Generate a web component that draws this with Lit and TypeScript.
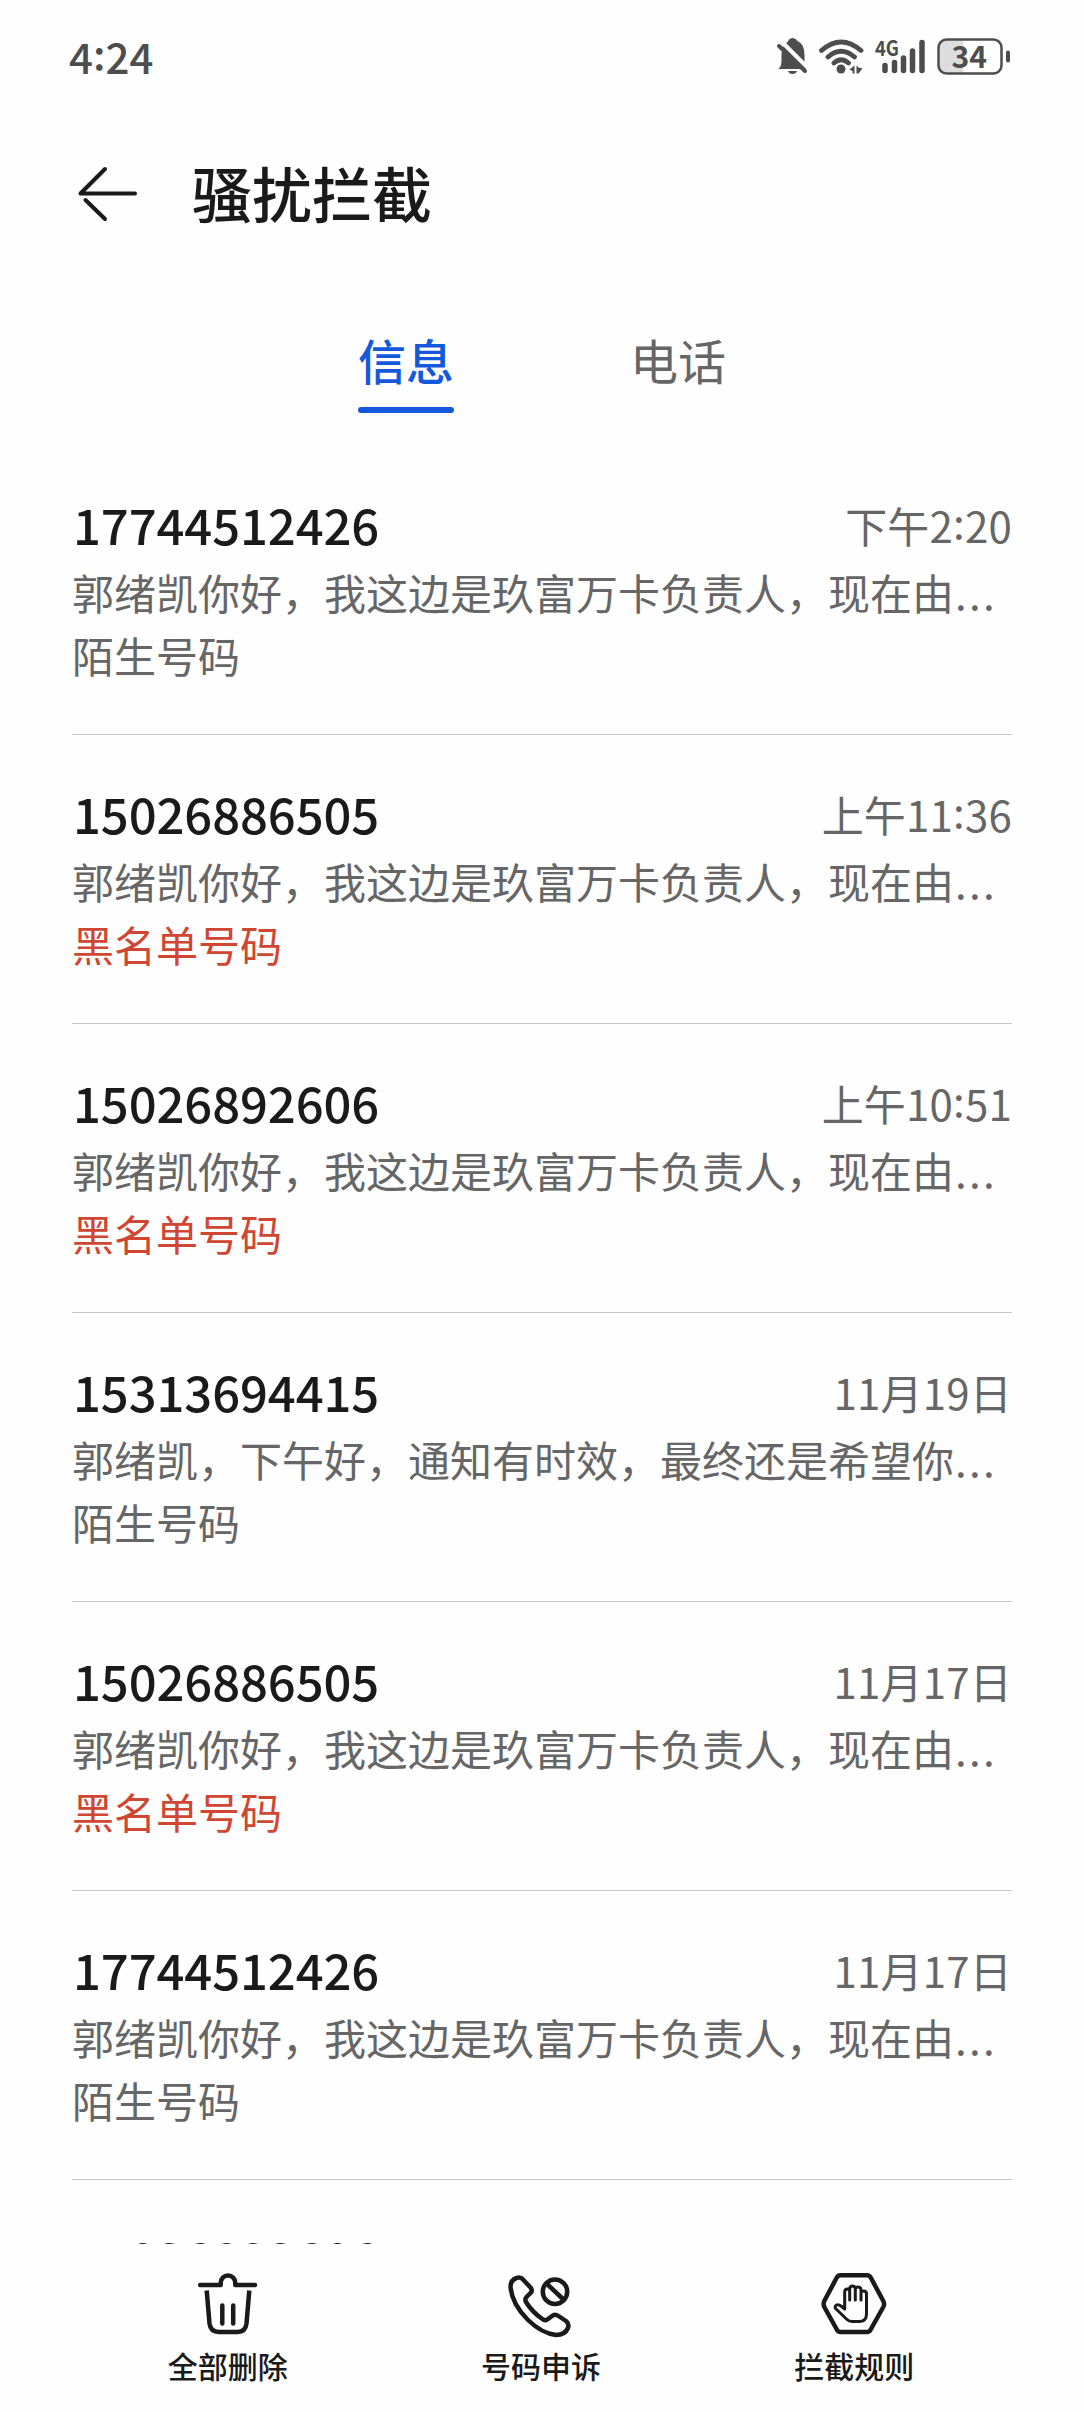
import { LitElement, html, css, svg, nothing } from "lit";
import { customElement, property } from "lit/decorators.js";

interface Message { number: string; time: string; text?: string; tag?: string; blocked?: boolean }

const PROMO = "郭绪凯你好，我这边是玖富万卡负责人，现在由";
const MESSAGES: Message[] = [
  { number: "17744512426", time: "下午2:20", text: PROMO, tag: "陌生号码" },
  { number: "15026886505", time: "上午11:36", text: PROMO, tag: "黑名单号码", blocked: true },
  { number: "15026892606", time: "上午10:51", text: PROMO, tag: "黑名单号码", blocked: true },
  { number: "15313694415", time: "11月19日", text: "郭绪凯，下午好，通知有时效，最终还是希望你", tag: "陌生号码" },
  { number: "15026886505", time: "11月17日", text: PROMO, tag: "黑名单号码", blocked: true },
  { number: "17744512426", time: "11月17日", text: PROMO, tag: "陌生号码" },
  { number: "15026892606", time: "11月16日" },
];

/* Raises the colon of a clock time to the middle of the digits. */
const clock = (time: string) => {
  const [before, after] = time.split(":");
  return after === undefined ? before : html`${before}<span class="colon">:</span>${after}`;
};

@customElement("status-bar")
class StatusBar extends LitElement {
  static styles = css`
    :host { display: flex; height: 112px; box-sizing: border-box; padding: 0 72px 0 69px; justify-content: space-between; align-items: center; color: #4d4d4d; }
    .time { font-size: 42px; font-weight: 500; line-height: 60px; margin-top: -1px; }
    .colon { vertical-align: 4px; line-height: 1; }
    .icons { display: block; }
    .net { font: 700 21px "Noto Sans CJK SC", sans-serif; }
    .level { font: 700 30px "Noto Sans CJK SC", sans-serif; }
  `;
  render() {
    return html`
      <span class="time">${clock("4:24")}</span>
      <svg class="icons" width="236" height="50" viewBox="776 30 236 50" fill="none" stroke="#4d4d4d" stroke-linecap="round">
        <path d="M778.500 68q3-3 3-7v-7q0-9 6-13q2-4 5-4t5 3q7 3 7 14v7q0 3 2 7z" fill="#4d4d4d" stroke="none"/>
        <path d="M788 70h9q-1 3-4.500 3t-4.500-3z" fill="#4d4d4d" stroke="none"/>
        <path d="M782 41L808 67" stroke="#fefefe" stroke-width="4"/>
        <path d="M779 45L805 70" stroke-width="4"/>
        <path d="M821.500 49.500q19.500-17 39.500 0M828 56q13-11.500 26.500 0M834 62q7-6.500 14.500 0" stroke-width="4.800"/>
        <circle cx="841" cy="68" r="4.500" fill="#4d4d4d" stroke="none"/>
        <path d="M854.500 64.500v8h-2v-2.500l-3-1.500zM856.500 64.500v8h2l4-5-4-1z" fill="#4d4d4d" stroke="none"/>
        <text class="net" x="875" y="55" fill="#4d4d4d" stroke="none" textLength="24" lengthAdjust="spacingAndGlyphs">4G</text>
        <path d="M885 64.500v5M894.500 61.500v8M903.500 57v12.500M912.500 50v19.500M922 41.500v28" stroke-width="5.500"/>
        <path d="M963 39v33h-17q-7 0-7-8v-17q0-8 7-8z" fill="#ddd" stroke="none"/>
        <rect x="938.500" y="38.500" width="63" height="34" rx="8" stroke-width="2.500"/>
        <path d="M1008 51.500v8" stroke-width="4"/>
        <text class="level" x="951.500" y="66.500" fill="#4d4d4d" stroke="none" textLength="35.500" lengthAdjust="spacingAndGlyphs">34</text>
      </svg>`;
  }
}

@customElement("message-row")
class MessageRow extends LitElement {
  @property({ attribute: false }) item!: Message;
  static styles = css`
    :host { display: block; flex: none; height: 289px; box-sizing: border-box; border-bottom: 1px solid #c6c6c6; padding-top: 44px; }
    .head { display: flex; justify-content: space-between; align-items: center; height: 68px; margin-bottom: 2px; }
    .number { font-size: 49px; font-weight: 500; color: #1a1a1a; letter-spacing: -0.1px; line-height: 68px; padding-left: 1px; }
    .time, .text, .tag { font-size: 42px; color: #666; }
    .time { line-height: 68px; letter-spacing: 0.2px; padding-top: 2px; }
    .colon { vertical-align: 4px; line-height: 1; }
    .text { line-height: 64px; white-space: nowrap; }
    .dots { letter-spacing: 2.3px; padding-left: 1px; }
    .tag { line-height: 62px; }
    .blocked { color: #cf4632; }
  `;
  render() {
    const m = this.item;
    return html`
      <div class="head"><span class="number">${m.number}</span><span class="time">${clock(m.time)}</span></div>
      ${m.text ? html`<div class="text">${m.text}<span class="dots">...</span></div>` : nothing}
      ${m.tag ? html`<div class="tag ${m.blocked ? "blocked" : ""}">${m.tag}</div>` : nothing}`;
  }
}

const trash = svg`
  <path d="M8.200 21H28.700V18.800a7.300 7.300 0 0 1 14.600 0V21H63"/>
  <path d="M14.700 26.500L17.500 59.500q1 8.500 9.500 8.500h18.500q8 0 9-8.500L57.300 26.500" stroke-linecap="butt"/>
  <path d="M30.300 41.500V59.500M41.200 41.500V59.500"/>`;
const phone = svg`
  <path d="M5.500 23C5.500 18 8.500 15 11.500 14Q15.500 12.500 18 15.500L25.500 23.500Q28 26.500 25.500 29L21.500 33Q19.500 35 21 38Q27 48 38 55.500Q41 57 43 55L47 52Q50 49.500 53.500 52L61 57Q64.500 60 63 64Q60 71 51 71Q37 69.500 23 56Q7 40 5.500 23Z"/>
  <circle cx="50" cy="27.700" r="12.200"/><path d="M41.500 19.500L58.500 35.500"/>`;
const hand = svg`
  <path d="M22.500 11.200H49Q51.500 11.200 52.700 13.500L65.300 37Q66.800 40 65.300 43L52.700 65.500Q51.500 68 49 68H22.500Q20 68 18.800 65.500L6.300 43Q5 40 6.300 37L18.800 13.500Q20 11.200 22.500 11.200Z"/>
  <path d="M26.700 45V28Q26.700 25 29.200 25Q31.700 25 31.700 28V36M31.700 27V25Q31.700 22 34.500 22Q37.300 22 37.300 25V36M37.300 25Q37.300 23 40.200 23Q43 23 43 26V36M43 28Q43 27 45.700 27Q48.500 27 48.500 30V50Q48.500 57.500 41 57.500H34Q31 57.500 29 55.500L18 45Q16 42.500 18.500 41Q20.500 40 23 42L26.700 45" stroke-width="3"/>`;

@customElement("app-root")
class AppRoot extends LitElement {
  static styles = css`
    :host { display: flex; flex-direction: column; height: 2412px; background: #fefefe; color: #1a1a1a; font-family: "Noto Sans CJK SC", sans-serif; overflow: hidden; }
    .header { display: flex; align-items: center; height: 164px; padding: 0 72px; gap: 48px; }
    .title { margin: -4px 0 0; font-size: 60px; font-weight: 500; line-height: 90px; }
    .tabs { display: flex; justify-content: center; gap: 176px; height: 170px; }
    .tab { height: 137px; box-sizing: border-box; padding-top: 47px; font-size: 48px; line-height: 72px; color: #666; }
    .active { color: #1458db; font-weight: 500; }
    .active::after { content: ""; display: block; height: 6px; margin-top: 12px; border-radius: 3px; background: #1458db; }
    .list { flex: 1; min-height: 0; overflow: hidden; padding: 0 72px; display: flex; flex-direction: column; }
    .actions { display: flex; height: 168px; box-sizing: border-box; padding: 20px 73px 0 71px; }
    .action { flex: 1; display: flex; flex-direction: column; align-items: center; font-size: 30px; font-weight: 500; line-height: 44px; }
  `;
  render() {
    const action = (icon: unknown, label: string) => html`
      <div class="action">
        <svg width="72" height="79" viewBox="0 0 72 79" fill="none" stroke="#1a1a1a" stroke-width="4.500" stroke-linecap="round" stroke-linejoin="round">${icon}</svg>
        <span>${label}</span>
      </div>`;
    return html`
      <status-bar></status-bar>
      <header class="header">
        <svg width="72" height="72" viewBox="72 158 72 72" fill="none" stroke="#1a1a1a" stroke-width="4" stroke-linecap="round" stroke-linejoin="round"><path d="M105 169L80.500 193.500H135M85.500 200L105 219"/></svg>
        <h1 class="title">骚扰拦截</h1>
      </header>
      <nav class="tabs"><span class="tab active">信息</span><span class="tab">电话</span></nav>
      <main class="list">${MESSAGES.map((m) => html`<message-row .item=${m}></message-row>`)}</main>
      <footer class="actions">${action(trash, "全部删除")}${action(phone, "号码申诉")}${action(hand, "拦截规则")}</footer>`;
  }
}
